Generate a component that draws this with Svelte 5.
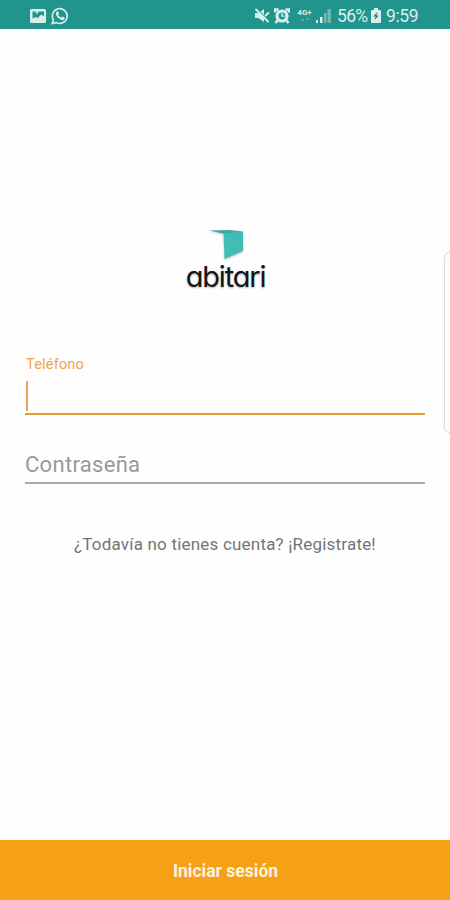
<script lang="ts">
  let phone = $state('');
  let password = $state('');
</script>

<div class="screen">
  <header class="status-bar">
    <div class="notifications">
      <svg width="16" height="16" viewBox="0 0 16 16" aria-hidden="true">
        <path
          fill="currentColor"
          fill-rule="evenodd"
          d="M1.500 1h13A1.500 1.500 0 0 1 16 2.500v11a1.500 1.500 0 0 1-1.500 1.500h-13A1.500 1.500 0 0 1 0 13.500v-11A1.500 1.500 0 0 1 1.500 1zM2.500 3.500v7l3-1.500 2 1 4-3.500 2.500 2V3.500H8.500l-1.500 3-1.500-3z"
        />
      </svg>
      <svg width="18" height="18" viewBox="0 0 18 18" aria-hidden="true">
        <path
          d="M1.200 16.800l1.200-4A7.400 7.400 0 1 1 5.400 15.600z"
          fill="none"
          stroke="currentColor"
          stroke-width="1.600"
          stroke-linejoin="round"
        />
        <path
          fill="currentColor"
          d="M5.600 4.800c.8-.8 1.500-.5 1.800.3l.6 1.500-.8 1.200c.7 1.400 1.700 2.300 3 2.900l1.100-1.100 2.100 1c.5.300.1 1.600-.6 2.100-1.400 1-3.500.2-5.400-1.600C5.100 9 4.100 6.600 5.600 4.800z"
        />
      </svg>
    </div>

    <div class="system">
      <svg class="mute" width="16" height="16" viewBox="0 0 16 16" aria-hidden="true">
        <path fill="currentColor" d="M1 5h3.500L10 1v13l-5.500-4H1z" />
        <path d="M2.500 .5l13 13" stroke="#22948e" stroke-width="1.400" />
        <path d="M1.500 1l13 13M11 8l4-3.500" stroke="currentColor" stroke-width="1.800" />
      </svg>
      <svg class="alarm" width="16" height="16" viewBox="0 0 16 16" aria-hidden="true">
        <path
          d="M1 4.500V1.500h3.500M15 4.500V1.500h-3.500M3.500 12.500L1.500 15M12.500 12.500l2 2.500"
          fill="none"
          stroke="currentColor"
          stroke-width="2.400"
        />
        <circle cx="8" cy="8" r="5" fill="none" stroke="currentColor" stroke-width="3.200" />
        <path d="M8 5v3.200h2.500" fill="none" stroke="currentColor" stroke-width="1.300" />
      </svg>
      <div class="network">
        <span>4G+</span>
        <svg width="10" height="5" viewBox="0 0 10 5" aria-hidden="true">
          <path d="M1 2l1.500 2L4 2zM6 3l1.500-2L9 3z" fill="currentColor" opacity="0.45" />
        </svg>
      </div>
      <svg class="signal" width="15" height="14" viewBox="0 0 15 14" aria-hidden="true">
        <path fill="currentColor" d="M0 11h2v3H0zM4 8h2.500v6H4z" />
        <path fill="currentColor" opacity="0.4" d="M8 4h2.500v10H8zM11.500 0h3.500v14h-3.500z" />
      </svg>
      <span class="percent">56%</span>
      <svg class="battery" width="10" height="15" viewBox="0 0 10 15" aria-hidden="true">
        <path fill="currentColor" d="M3 0h4v2h2a1 1 0 0 1 1 1v11a1 1 0 0 1-1 1H1a1 1 0 0 1-1-1V3a1 1 0 0 1 1-1h2z" />
        <path fill="#397f7b" d="M6.500 4L2 8.500h2.500L3.500 12 8 7.500H5.500z" />
      </svg>
      <span class="clock">9:59</span>
    </div>
  </header>

  <main>
    <div class="logo">
      <svg width="36" height="32" viewBox="0 0 36 32" aria-hidden="true">
        <path fill="#42bdb4" d="M14.500 3.500L34 2.500V22L15.500 30z" />
        <path fill="#38aaa3" d="M0 1.500L20 1l14 1.500-19.500 2z" />
      </svg>
      <span class="wordmark">abitari</span>
    </div>

    <form id="login">
      <label class="field active">
        <span class="caption">Teléfono</span>
        <span class="entry">
          <span class="caret"></span>
          <input type="tel" bind:value={phone} aria-label="Teléfono" />
        </span>
      </label>
      <label class="field password">
        <input type="password" placeholder="Contraseña" bind:value={password} />
      </label>
    </form>

    <a class="register" href="#registro">¿Todavía no tienes cuenta? ¡Registrate!</a>
  </main>

  <button class="submit" type="submit" form="login">Iniciar sesión</button>
  <div class="edge-handle"></div>
</div>

<style>
  :global(body) {
    background: #fefefe;
  }

  .screen {
    position: relative;
    display: flex;
    flex-direction: column;
    height: 900px;
    overflow: hidden;
    background: #fefefe;
    font-family: Roboto, "Liberation Sans", sans-serif;
  }

  /* Status bar */
  .status-bar {
    display: flex;
    justify-content: space-between;
    box-sizing: border-box;
    height: 29px;
    padding: 2px 31px 0 30px;
    background: #22948e;
    color: #d8f0ec;
  }

  .notifications,
  .system {
    display: flex;
    align-items: center;
  }

  .notifications {
    gap: 5px;
  }

  .alarm {
    margin-left: 4px;
  }

  .network {
    display: flex;
    flex-direction: column;
    align-items: center;
    width: 17px;
    margin-left: 6px;
    font-size: 8px;
    font-weight: 700;
    line-height: 8px;
  }

  .signal {
    margin-left: 3px;
  }

  .percent,
  .clock {
    padding-top: 2px;
    font-size: 17.5px;
    line-height: 27px;
    white-space: nowrap;
  }

  .percent {
    width: 31px;
    margin-left: 6px;
    letter-spacing: -0.7px;
  }

  .battery {
    margin-left: 3px;
  }

  .clock {
    width: 33px;
    margin-left: 5px;
    letter-spacing: -0.4px;
  }

  /* Content */
  main {
    display: flex;
    flex: 1;
    flex-direction: column;
    padding: 200px 25px 0;
  }

  .logo {
    display: flex;
    flex-direction: column;
    align-items: center;
    height: 66px;
  }

  .logo svg {
    margin-left: 3px;
    filter: drop-shadow(0 1px 1px rgba(0, 0, 0, 0.25));
  }

  .wordmark {
    margin-top: -1px;
    padding-left: 1px;
    font-family: Inter, Lato, sans-serif;
    font-size: 29px;
    font-feature-settings: "cv11";
    line-height: 33px;
    letter-spacing: -1.2px;
    color: #151515;
    text-shadow: 0 1px 2px rgba(0, 0, 0, 0.3);
  }

  .field {
    display: block;
    box-sizing: border-box;
  }

  .active {
    height: 60px;
    margin-top: 60px;
    border-bottom: 2px solid #e59a2c;
  }

  .caption {
    display: block;
    padding-left: 1px;
    font-size: 14.5px;
    line-height: 20px;
    letter-spacing: 0.2px;
    color: #f0a34a;
  }

  .entry {
    display: flex;
    height: 34px;
    padding-top: 6px;
  }

  .caret {
    width: 2px;
    height: 30px;
    margin-left: 1px;
    background: #ef9f55;
  }

  input {
    flex: 1;
    width: 100%;
    padding: 0;
    border: 0;
    outline: 0;
    background: transparent;
    font: inherit;
    font-size: 22px;
    color: #555;
  }

  .password {
    height: 69px;
    padding-top: 34px;
    border-bottom: 2px solid #ababab;
  }

  .password input {
    height: 30px;
    letter-spacing: 0.3px;
  }

  input::placeholder {
    color: #999;
    opacity: 1;
  }

  .register {
    align-self: center;
    margin-top: 50px;
    font-size: 17px;
    line-height: 20px;
    letter-spacing: 0.2px;
    color: #757575;
    text-decoration: none;
    white-space: nowrap;
  }

  .submit {
    height: 60px;
    padding: 2px 0 0 1px;
    border: 0;
    background: #f6a016;
    font: inherit;
    font-size: 17.5px;
    font-weight: 700;
    color: #fff3df;
  }

  /* Edge panel handle, half off screen */
  .edge-handle {
    position: absolute;
    top: 252px;
    right: -8px;
    box-sizing: border-box;
    width: 14px;
    height: 181px;
    border: 1px solid #dcdcdc;
    border-radius: 6px;
    background: #fefefe;
    box-shadow: 0 0 2px rgba(0, 0, 0, 0.1);
  }
</style>
